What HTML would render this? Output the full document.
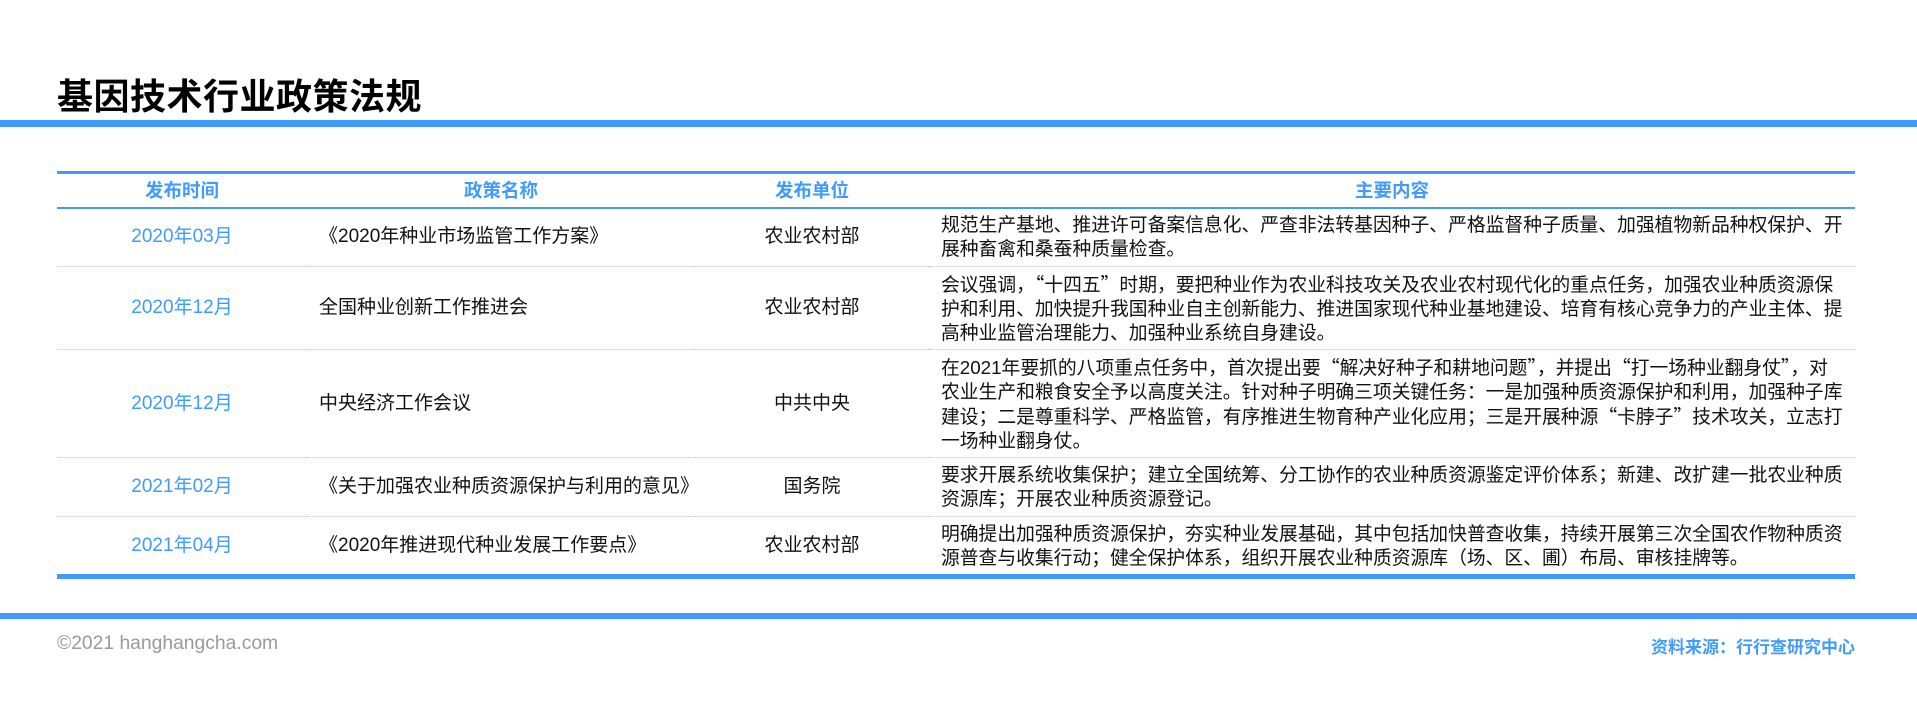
<!DOCTYPE html>
<html><head><meta charset="utf-8"><style>
*{margin:0;padding:0;box-sizing:border-box}
body{width:1917px;height:727px;background:#fff;position:relative;overflow:hidden;font-family:"Liberation Sans","Noto Sans CJK SC",sans-serif;color:#111}
.title{position:absolute;left:57px;top:68px;font-size:36px;font-weight:bold;color:#000;letter-spacing:0.5px}
.bar{position:absolute;left:0;width:1917px;background:#3f9bff}
table{position:absolute;left:57px;top:171px;width:1798px;border-collapse:collapse;font-size:19px}
th{color:#3f9bff;font-weight:bold;font-size:18.5px;height:35px;border-top:3px solid #3f9bff;border-bottom:2px solid #3f9bff;text-align:center}
td{border-bottom:1px dotted #c8c8c8;line-height:24px;vertical-align:middle}
td.d{color:#3f9bff;text-align:center}
td.n{padding-left:12px}
td.u{text-align:center}
td.c{padding:0 0 0 12px;font-size:18.8px;white-space:nowrap}
.q{font-family:"Noto Sans CJK SC",sans-serif}
tr.last td{border-bottom:5px solid #3f9bff}
.fl{position:absolute;left:57px;top:633px;font-size:19.3px;color:#9a9a9a}
.fr{position:absolute;right:62px;top:633px;font-size:17px;color:#3f9bff;font-weight:bold}
</style></head><body>
<div class="title">基因技术行业政策法规</div>
<div class="bar" style="top:120px;height:7px"></div>
<table>
<colgroup><col style="width:250px"><col style="width:388px"><col style="width:234px"><col></colgroup>
<tr><th>发布时间</th><th>政策名称</th><th>发布单位</th><th>主要内容</th></tr>
<tr style="height:59px"><td class="d">2020年03月</td><td class="n">《2020年种业市场监管工作方案》</td><td class="u">农业农村部</td><td class="c">规范生产基地、推进许可备案信息化、严查非法转基因种子、严格监督种子质量、加强植物新品种权保护、开<br>展种畜禽和桑蚕种质量检查。</td></tr>
<tr style="height:83px"><td class="d">2020年12月</td><td class="n">全国种业创新工作推进会</td><td class="u">农业农村部</td><td class="c">会议强调，<span class="q">“</span>十四五<span class="q">”</span>时期，要把种业作为农业科技攻关及农业农村现代化的重点任务，加强农业种质资源保<br>护和利用、加快提升我国种业自主创新能力、推进国家现代种业基地建设、培育有核心竞争力的产业主体、提<br>高种业监管治理能力、加强种业系统自身建设。</td></tr>
<tr style="height:108px"><td class="d">2020年12月</td><td class="n">中央经济工作会议</td><td class="u">中共中央</td><td class="c">在2021年要抓的八项重点任务中，首次提出要<span class="q">“</span>解决好种子和耕地问题<span class="q">”</span>，并提出<span class="q">“</span>打一场种业翻身仗<span class="q">”</span>，对<br>农业生产和粮食安全予以高度关注。针对种子明确三项关键任务：一是加强种质资源保护和利用，加强种子库<br>建设；二是尊重科学、严格监管，有序推进生物育种产业化应用；三是开展种源<span class="q">“</span>卡脖子<span class="q">”</span>技术攻关，立志打<br>一场种业翻身仗。</td></tr>
<tr style="height:59px"><td class="d">2021年02月</td><td class="n">《关于加强农业种质资源保护与利用的意见》</td><td class="u">国务院</td><td class="c">要求开展系统收集保护；建立全国统筹、分工协作的农业种质资源鉴定评价体系；新建、改扩建一批农业种质<br>资源库；开展农业种质资源登记。</td></tr>
<tr class="last" style="height:60px"><td class="d">2021年04月</td><td class="n">《2020年推进现代种业发展工作要点》</td><td class="u">农业农村部</td><td class="c">明确提出加强种质资源保护，夯实种业发展基础，其中包括加快普查收集，持续开展第三次全国农作物种质资<br>源普查与收集行动；健全保护体系，组织开展农业种质资源库（场、区、圃）布局、审核挂牌等。</td></tr>
</table>
<div class="bar" style="top:613px;height:6px"></div>
<div class="fl">©2021 hanghangcha.com</div>
<div class="fr">资料来源：行行查研究中心</div>
</body></html>
